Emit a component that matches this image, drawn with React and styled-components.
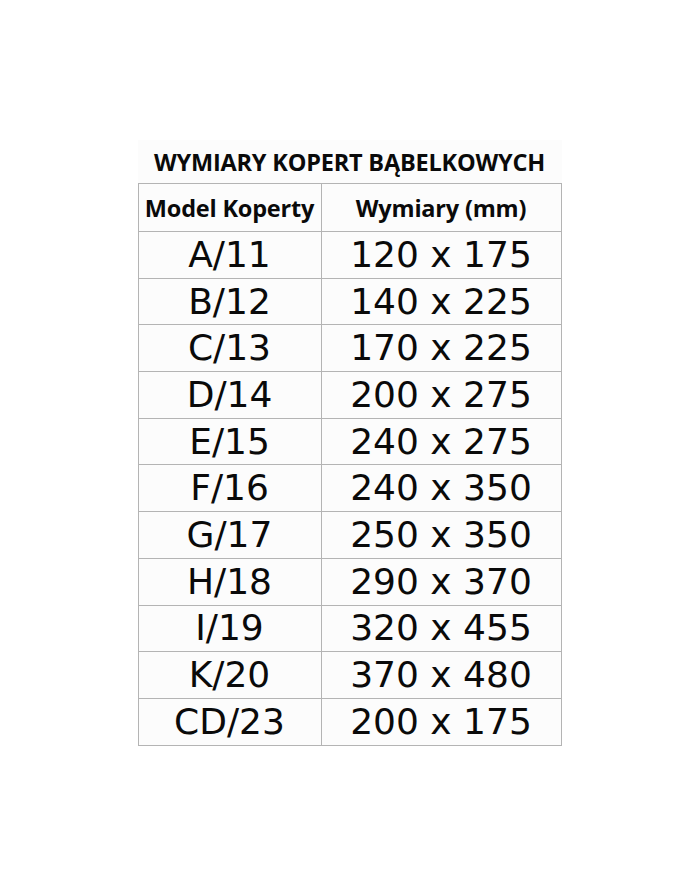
import React from "react";
import styled, { createGlobalStyle } from "styled-components";

const GlobalStyle = createGlobalStyle`
  html, body {
    margin: 0;
    padding: 0;
    background: #ffffff;
  }
`;

const Page = styled.div`
  width: 700px;
  height: 886px;
  display: flex;
  flex-direction: column;
  align-items: center;
  padding-top: 140px;
  box-sizing: border-box;
`;

const Sheet = styled.div`
  width: 424px;
  margin-left: -1px;
  background: #fcfcfc;
`;

const Title = styled.div`
  height: 43px;
  display: flex;
  align-items: center;
  justify-content: center;
  font-family: "Open Sans", sans-serif;
  font-weight: 700;
  font-size: 23.5px;
  color: #0a0a0a;
  letter-spacing: -0.2px;
`;

const Table = styled.table`
  width: 100%;
  border-collapse: collapse;
  table-layout: fixed;
`;

const HeadCell = styled.th`
  height: 47px;
  padding: 0;
  border: 1px solid #b4b4b4;
  font-family: "Open Sans", sans-serif;
  font-weight: 700;
  font-size: 23.5px;
  letter-spacing: -0.2px;
  color: #0a0a0a;
  text-align: center;
  width: ${(p) => p.$w || "auto"};
`;

const Cell = styled.td`
  height: 45.7px;
  padding: 0;
  border: 1px solid #b4b4b4;
  font-family: "DejaVu Sans", Verdana, sans-serif;
  font-size: 36px;
  color: #0a0a0a;
  text-align: center;
  line-height: 1;
`;

const rows = [
  ["A/11", "120 x 175"],
  ["B/12", "140 x 225"],
  ["C/13", "170 x 225"],
  ["D/14", "200 x 275"],
  ["E/15", "240 x 275"],
  ["F/16", "240 x 350"],
  ["G/17", "250 x 350"],
  ["H/18", "290 x 370"],
  ["I/19", "320 x 455"],
  ["K/20", "370 x 480"],
  ["CD/23", "200 x 175"],
];

export default function App() {
  return (
    <>
      <GlobalStyle />
      <Page>
        <Sheet>
          <Title>WYMIARY KOPERT BĄBELKOWYCH</Title>
          <Table>
            <thead>
              <tr>
                <HeadCell $w="182px">Model Koperty</HeadCell>
                <HeadCell>Wymiary (mm)</HeadCell>
              </tr>
            </thead>
            <tbody>
              {rows.map(([model, size]) => (
                <tr key={model}>
                  <Cell>{model}</Cell>
                  <Cell>{size}</Cell>
                </tr>
              ))}
            </tbody>
          </Table>
        </Sheet>
      </Page>
    </>
  );
}
